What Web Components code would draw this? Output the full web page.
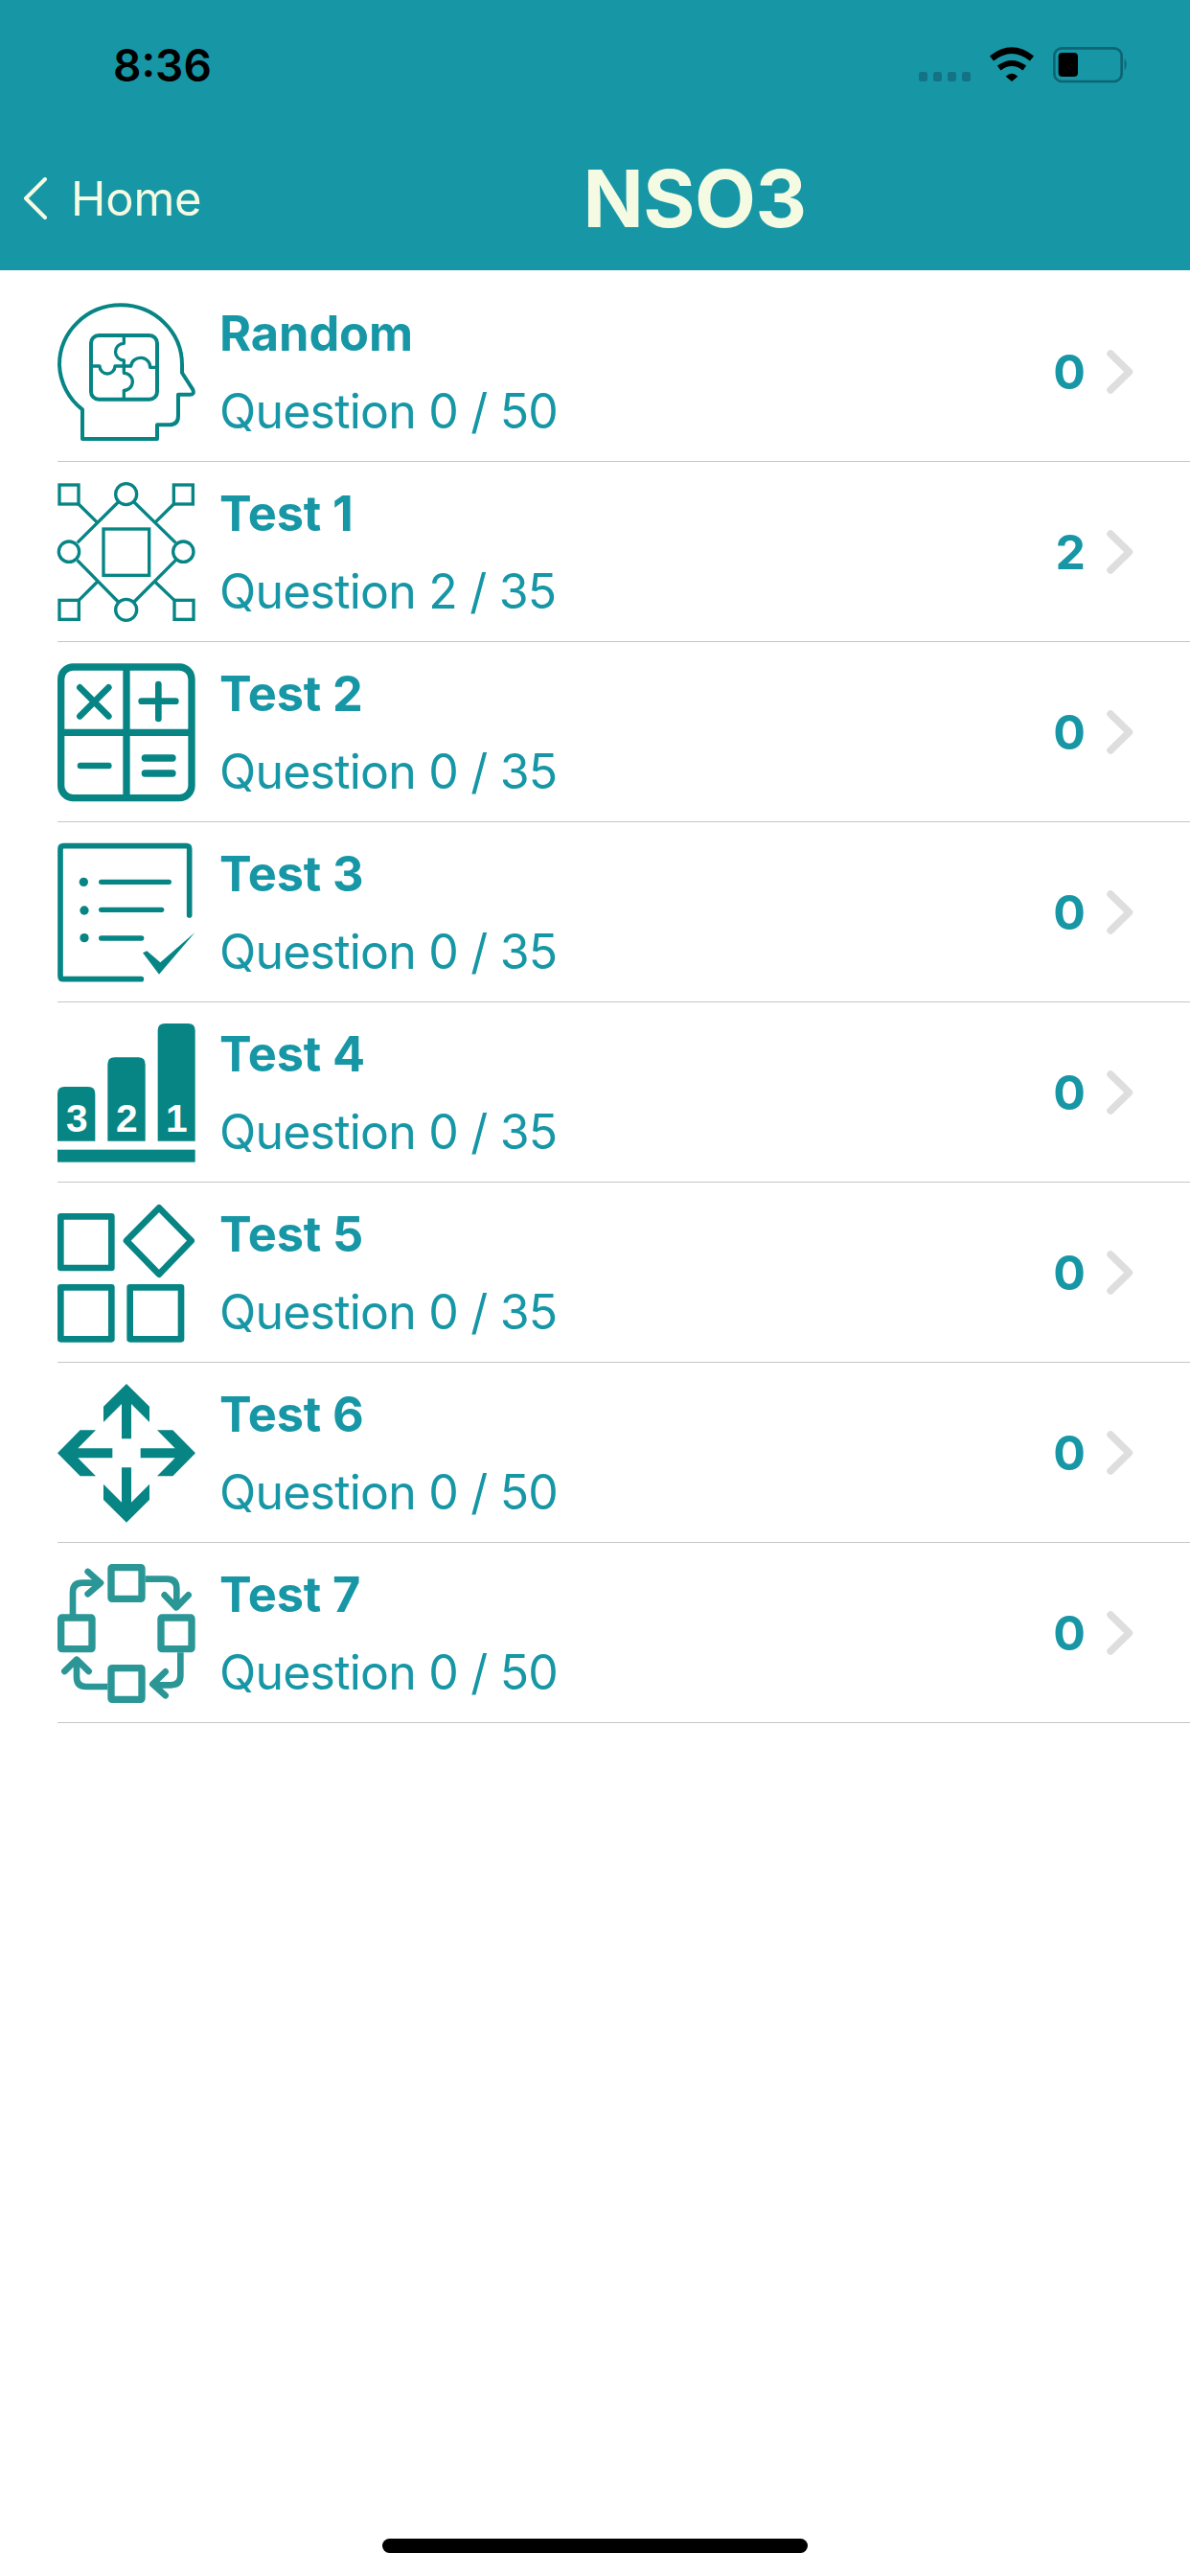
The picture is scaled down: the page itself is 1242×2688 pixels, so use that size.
<!DOCTYPE html>
<html lang="en">
<head>
<meta charset="utf-8">
<title>NSO3</title>
<style>
  html, body { margin: 0; padding: 0; background: #fff; }
  body { font-family: Inter, "Liberation Sans", sans-serif; }
</style>
</head>
<body>
<quiz-app>
  <status-bar slot="top" time="8:36"></status-bar>
  <nav-bar slot="top" back="Home" title-text="NSO3"></nav-bar>
  <quiz-row name="Random" done="0" total="50" icon="head"></quiz-row>
  <quiz-row name="Test 1" done="2" total="35" icon="network"></quiz-row>
  <quiz-row name="Test 2" done="0" total="35" icon="calc"></quiz-row>
  <quiz-row name="Test 3" done="0" total="35" icon="checklist"></quiz-row>
  <quiz-row name="Test 4" done="0" total="35" icon="podium"></quiz-row>
  <quiz-row name="Test 5" done="0" total="35" icon="shapes"></quiz-row>
  <quiz-row name="Test 6" done="0" total="50" icon="arrows"></quiz-row>
  <quiz-row name="Test 7" done="0" total="50" icon="cycle"></quiz-row>
</quiz-app>

<script>
  // Overall screen: header on top, scrolling list below, home indicator pinned to the bottom.
  class QuizApp extends HTMLElement {
    constructor() {
      super();
      this.attachShadow({ mode: 'open' }).innerHTML = `
        <style>
          :host { display: flex; flex-direction: column; height: 2688px; background: #fff; overflow: hidden; }
          header { background: #1796a5; height: 282px; display: flex; flex-direction: column; }
          main { flex: 1; padding-top: 12px; }
          .indicator { width: 444px; height: 15px; border-radius: 7.5px; background: #000; margin: 0 auto 24px; }
        </style>
        <header><slot name="top"></slot></header>
        <main><slot></slot></main>
        <div class="indicator"></div>`;
    }
  }

  class StatusBar extends HTMLElement {
    constructor() {
      super();
      this.attachShadow({ mode: 'open' }).innerHTML = `
        <style>
          :host { display: flex; align-items: center; height: 136px; padding: 0 63px 0 118px; box-sizing: border-box; }
          .time { font: 600 46px/1 Inter, "Liberation Sans", sans-serif; color: #000; flex: 1; }
          svg { display: block; margin-top: 6px; }
        </style>
        <span class="time"></span>
        <svg width="220" height="44" viewBox="0 0 660 132">
          <!-- signal dots -->
          <g fill="#137283">
            <rect x="0" y="78" width="27" height="30" rx="8"/>
            <rect x="45" y="78" width="27" height="30" rx="8"/>
            <rect x="90" y="78" width="27" height="30" rx="8"/>
            <rect x="135" y="78" width="27" height="30" rx="8"/>
          </g>
          <!-- wifi -->
          <g fill="none" stroke="#000">
            <path d="M228 36 Q291 -14 354 36" stroke-width="20"/>
            <path d="M251 66 Q291 36 331 66" stroke-width="18"/>
          </g>
          <path d="M272 92 Q291 74 310 92 L291 108 Z" fill="#000"/>
          <!-- battery -->
          <rect x="424" y="4" width="211" height="104" rx="24" fill="none" stroke="#0e6473" stroke-width="8"/>
          <rect x="437" y="18" width="61" height="75" rx="12" fill="#000"/>
          <path d="M644 36 Q656 54 644 74 Z" fill="#0e6473"/>
        </svg>`;
      this.shadowRoot.querySelector('.time').textContent = this.getAttribute('time');
    }
  }

  class NavBar extends HTMLElement {
    constructor() {
      super();
      this.attachShadow({ mode: 'open' }).innerHTML = `
        <style>
          :host { display: flex; align-items: center; height: 146px; padding-bottom: 4px; box-sizing: border-box; color: #f4fbe2; font-family: Inter, "Liberation Sans", sans-serif; }
          .back { display: flex; align-items: center; width: 208px; box-sizing: border-box; padding-left: 24px; gap: 25px; font-size: 49px; letter-spacing: -0.2px; white-space: nowrap; }
          svg { display: block; flex: none; }
          h1 { flex: 1; margin: 0; text-align: center; font-size: 83px; font-weight: 700; line-height: 1; letter-spacing: -0.5px; }
        </style>
        <div class="back">
          <svg width="25" height="44" viewBox="0 0 25 44"><path d="M23 2 L3 22 L23 42" fill="none" stroke="#f4fbe2" stroke-width="4" stroke-linecap="round" stroke-linejoin="round"/></svg>
          <span class="label"></span>
        </div>
        <h1></h1>`;
      this.shadowRoot.querySelector('.label').textContent = this.getAttribute('back');
      this.shadowRoot.querySelector('h1').textContent = this.getAttribute('title-text');
    }
  }

  // Line icons, each 144px square on a 432-unit grid.
  const TEAL = '#078585';
  const ICONS = {
    head: `<svg viewBox="60 78 432 432"><g fill="none" stroke="${TEAL}" stroke-linejoin="round" stroke-linecap="round">
      <path stroke-width="12" d="M138 504 H372 V460 H410 Q438 460 438 432 V365 H476 Q490 365 484 350 L450 297 V272 A192 187 0 0 0 66 272 A192 187 0 0 0 138 412 Z"/>
      <rect stroke-width="12" x="165" y="180" width="207" height="200" rx="24"/>
      <path stroke-width="10" d="M268 180 V205 A26 26 0 0 0 268 258 V298 A27 27 0 0 1 268 352 V380"/>
      <path stroke-width="10" d="M165 276 H192 A24 24 0 0 0 240 276 H290 A30 28 0 0 1 350 280 H372"/>
    </g></svg>`,
    network: `<svg viewBox="60 643 432 432"><g fill="none" stroke="${TEAL}" stroke-width="10">
      <rect x="66" y="649" width="60" height="60"/><rect x="424" y="649" width="60" height="60"/>
      <rect x="66" y="1010" width="61" height="60"/><rect x="426" y="1010" width="60" height="60"/>
      <circle cx="275" cy="678" r="33"/><circle cx="96" cy="858" r="32"/><circle cx="454" cy="858" r="32"/><circle cx="275" cy="1040" r="33"/>
      <rect x="204" y="787" width="143" height="145"/>
      <path d="M250 703 L122 830 M300 703 L430 830 M122 885 L250 1015 M430 885 L300 1015 M126 709 L185 767 M424 709 L365 767 M127 1010 L185 952 M426 1010 L365 952"/>
    </g></svg>`,
    calc: `<svg viewBox="60 66 432 432"><g fill="none" stroke="${TEAL}" stroke-width="22" stroke-linecap="round">
      <rect x="71" y="78" width="409" height="410" rx="38"/>
      <path stroke-linecap="butt" d="M276 78 V488 M71 283 H480"/>
      <path stroke-width="20" d="M130 142 L220 232 M220 142 L130 232 M323 185 H430 M376 132 V240 M132 387 H220"/>
      <path stroke-width="22" d="M334 363 H420 M334 411 H420"/>
    </g></svg>`,
    checklist: `<svg viewBox="60 630 432 432">
      <g fill="none" stroke="${TEAL}" stroke-width="17" stroke-linecap="round" stroke-linejoin="round">
        <path d="M322 1055 H78 Q69 1055 69 1046 V648 Q69 638 79 638 H463 Q473 638 473 648 V855"/>
        <path stroke-width="16" d="M197 751 H409 M197 838 H386 M197 927 H323"/>
      </g>
      <g fill="${TEAL}">
        <circle cx="142" cy="751" r="14"/><circle cx="144" cy="840" r="14"/><circle cx="144" cy="926" r="14"/>
        <polygon points="327,973 340,967 382,1003 491,908 378,1040"/>
      </g></svg>`,
    podium: `<svg viewBox="60 54 432 432">
      <g fill="${TEAL}">
        <path d="M60 422 V274 Q60 252 82 252 H156 Q178 252 178 274 V422 Z"/>
        <path d="M217 422 V182 Q217 160 239 160 H313 Q335 160 335 182 V422 Z"/>
        <path d="M374 422 V76 Q374 54 396 54 H469 Q491 54 491 76 V422 Z"/>
        <rect x="60" y="449" width="431" height="39"/>
      </g>
      <g fill="#fff" font-family="'Liberation Sans', Inter, sans-serif" font-weight="700" font-size="122" text-anchor="middle">
        <text x="121" y="394">3</text><text x="277" y="394">2</text><text x="433" y="394">1</text>
      </g></svg>`,
    shapes: `<svg viewBox="60 618 432 432"><g fill="none" stroke="${TEAL}" stroke-width="20" stroke-linejoin="round">
      <rect x="70" y="658" width="159" height="161"/>
      <rect x="70" y="880" width="159" height="162"/>
      <rect x="287" y="880" width="160" height="162"/>
      <polygon points="378,631 479,734 378,839 276,734"/>
    </g></svg>`,
    arrows: `<svg viewBox="60 42 432 432"><g fill="${TEAL}">
      <polygon points="276,42 348,113 348,162 291,105 291,214 261,214 261,105 204,162 204,113"/>
      <polygon points="276,476 348,405 348,356 291,413 291,304 261,304 261,413 204,356 204,405"/>
      <polygon points="60,259 131,187 180,187 124,244 232,244 232,274 124,274 180,331 131,331"/>
      <polygon points="492,259 421,187 372,187 428,244 320,244 320,274 428,274 372,331 421,331"/>
    </g></svg>`,
    cycle: `<svg viewBox="60 606 432 432"><g fill="none" stroke="#2b9696" stroke-width="22" stroke-linecap="round" stroke-linejoin="round">
      <rect x="228" y="617" width="96" height="98" rx="3"/>
      <rect x="384" y="774" width="96" height="98" rx="3"/>
      <rect x="71" y="774" width="97" height="98" rx="3"/>
      <rect x="228" y="932" width="96" height="98" rx="3"/>
      <g stroke-width="20">
        <path stroke-linecap="butt" d="M108 765 V695 Q108 665 138 665 H190"/>
        <path d="M155 630 L195 665 L155 700"/>
        <path stroke-linecap="butt" d="M335 653 H403 Q433 653 433 683 V735"/>
        <path d="M395 703 L432 742 L470 703"/>
        <path stroke-linecap="butt" d="M445 883 V955 Q445 985 415 985 H365"/>
        <path d="M398 943 L358 982 L398 1018"/>
        <path stroke-linecap="butt" d="M217 990 H150 Q120 990 120 960 V912"/>
        <path d="M82 942 L120 905 L158 942"/>
      </g>
    </g></svg>`
  };

  class QuizRow extends HTMLElement {
    constructor() {
      super();
      this.attachShadow({ mode: 'open' }).innerHTML = `
        <style>
          :host { display: block; margin-left: 60px; height: 188px; box-sizing: border-box; border-bottom: 1px solid #c6c6c8; font-family: Inter, "Liberation Sans", sans-serif; color: #1797a6; }
          .row { display: flex; align-items: center; height: 187px; }
          .icon { width: 144px; height: 144px; flex: none; margin-right: 25px; }
          .icon svg { display: block; width: 144px; height: 144px; overflow: visible; }
          .text { flex: 1; display: flex; flex-direction: column; gap: 23px; padding-top: 2px; }
          .name { font-size: 50.5px; font-weight: 700; line-height: 58px; letter-spacing: -0.1px; }
          .sub { font-size: 50px; font-weight: 400; line-height: 58px; letter-spacing: -0.8px; }
          .count { font-size: 50px; font-weight: 700; width: 44px; text-align: right; line-height: 1; }
          .chev { margin: 0 58px 0 21px; display: block; }
        </style>
        <div class="row">
          <div class="icon"></div>
          <div class="text"><span class="name"></span><span class="sub"></span></div>
          <span class="count"></span>
          <svg class="chev" width="30" height="48" viewBox="0 0 30 48"><path d="M5 5 L24.5 24 L5 43" fill="none" stroke="#dedede" stroke-width="7.5" stroke-linecap="round" stroke-linejoin="round"/></svg>
        </div>`;
      const $ = s => this.shadowRoot.querySelector(s);
      const done = this.getAttribute('done');
      $('.icon').innerHTML = ICONS[this.getAttribute('icon')];
      $('.name').textContent = this.getAttribute('name');
      $('.sub').textContent = `Question ${done} / ${this.getAttribute('total')}`;
      $('.count').textContent = done;
    }
  }

  customElements.define('quiz-app', QuizApp);
  customElements.define('status-bar', StatusBar);
  customElements.define('nav-bar', NavBar);
  customElements.define('quiz-row', QuizRow);
</script>
</body>
</html>
